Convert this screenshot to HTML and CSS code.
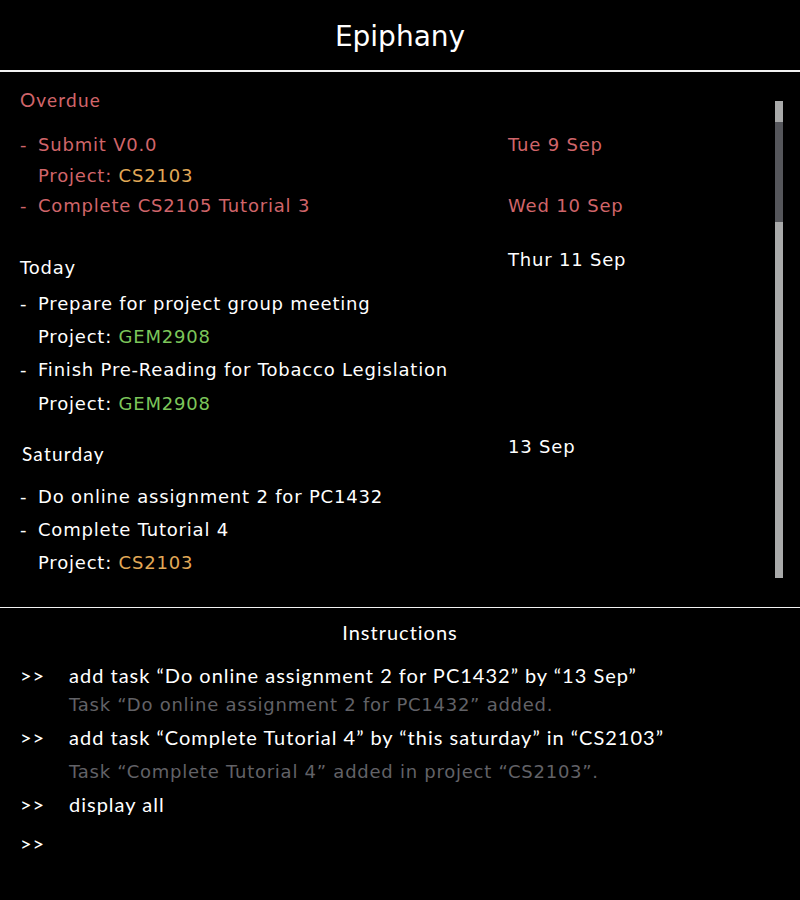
FILE: index.html
```html
<!DOCTYPE html>
<html>
<head>
<meta charset="utf-8">
<title>Epiphany</title>
<link rel="stylesheet" href="styles.css">
</head>
<body>
<div class="app">
  <header class="title-bar"><h1 class="title">Epiphany</h1></header>

  <section class="tasks-panel">
    <div class="tasks">
      <div class="section section-overdue">
        <div class="section-head"><span class="label label-myriad">Overdue</span></div>
        <div class="items">
          <div class="row">
            <div class="task">
              <div class="line"><span class="dash">-</span>Submit V0.0</div>
              <div class="line project">Project: <span class="proj-orange">CS2103</span></div>
            </div>
            <div class="date">Tue 9 Sep</div>
          </div>
          <div class="row">
            <div class="task">
              <div class="line"><span class="dash">-</span>Complete CS2105 Tutorial 3</div>
            </div>
            <div class="date">Wed 10 Sep</div>
          </div>
        </div>
      </div>

      <div class="section section-today">
        <div class="section-head">
          <span class="label">Today</span>
          <span class="date">Thur 11 Sep</span>
        </div>
        <div class="items tall">
          <div class="line"><span class="dash">-</span>Prepare for project group meeting</div>
          <div class="line project">Project: <span class="proj-green">GEM2908</span></div>
          <div class="line"><span class="dash">-</span>Finish Pre-Reading for Tobacco Legislation</div>
          <div class="line project">Project: <span class="proj-green">GEM2908</span></div>
        </div>
      </div>

      <div class="section section-saturday">
        <div class="section-head">
          <span class="label label-myriad label-sat">Saturday</span>
          <span class="date">13 Sep</span>
        </div>
        <div class="items tall">
          <div class="line"><span class="dash">-</span>Do online assignment 2 for PC1432</div>
          <div class="line"><span class="dash">-</span>Complete Tutorial 4</div>
          <div class="line project">Project: <span class="proj-orange">CS2103</span></div>
        </div>
      </div>
    </div>
    <div class="scrollbar"><div class="scroll-thumb"></div></div>
  </section>

  <section class="console">
    <h2 class="console-title">Instructions</h2>
    <div class="entry">
      <div class="cmd"><span class="prompt">&gt;&gt;</span>add task “Do online assignment 2 for PC1432” by “13 Sep”</div>
      <div class="resp">Task “Do online assignment 2 for PC1432” added.</div>
    </div>
    <div class="entry entry-next">
      <div class="cmd"><span class="prompt">&gt;&gt;</span>add task “Complete Tutorial 4” by “this saturday” in “CS2103”</div>
      <div class="resp resp-gap">Task “Complete Tutorial 4” added in project “CS2103”.</div>
    </div>
    <div class="entry entry-next">
      <div class="cmd"><span class="prompt">&gt;&gt;</span>display all</div>
    </div>
    <div class="entry entry-last">
      <div class="cmd"><span class="prompt">&gt;&gt;</span></div>
    </div>
  </section>
</div>
</body>
</html>
```

FILE: styles.css
```css
html, body {
  margin: 0;
  padding: 0;
  background: #000;
}

.app {
  width: 800px;
  height: 900px;
  background: #000;
  color: #fff;
  font-family: "DejaVu Sans", "Noto Sans", sans-serif;
  font-size: 18px;
  letter-spacing: 0.8px;
  overflow: hidden;
}

.title-bar {
  height: 70px;
  border-bottom: 2px solid #f2f2f2;
  display: flex;
  align-items: center;
  justify-content: center;
}

.title {
  margin: 0;
  font-family: "DejaVu Sans", sans-serif;
  font-weight: 400;
  font-size: 28px;
  letter-spacing: 0;
  line-height: 40px;
  padding-top: 3px;
}

.tasks-panel {
  height: 535px;
  border-bottom: 1px solid #f2f2f2;
  display: flex;
}

.tasks {
  flex: 1;
  padding: 13px 0 0 20px;
}

.section-today { margin-top: 23px; }
.section-saturday { margin-top: 12px; }

.section-head {
  display: flex;
  align-items: flex-start;
  line-height: 30px;
}

.label {
  width: 488px;
  flex: none;
}

.section-today .label {
  padding-top: 8px;
}

.section-saturday .label {
  padding-top: 7px;
}

.label-myriad {
  font-family: Lato, "Open Sans", sans-serif;
  font-size: 19px;
  letter-spacing: 1.2px;
}

.label-sat {
  padding-left: 2px;
  width: 486px;
}

.section-overdue {
  color: #d0656a;
}

.section-overdue .items {
  margin-top: 15px;
}

.section-overdue .line {
  line-height: 30.5px;
}

.row {
  display: flex;
  align-items: flex-start;
}

.task {
  width: 488px;
  flex: none;
}

.line {
  line-height: 30px;
  white-space: nowrap;
}

.items.tall {
  margin-top: 4px;
}

.section-saturday .items.tall {
  margin-top: 11px;
}

.items.tall .line {
  line-height: 33px;
}

.section-today .items.tall .line {
  line-height: 33.4px;
}

.dash {
  display: inline-block;
  width: 18px;
  letter-spacing: 0;
}

.project {
  padding-left: 18px;
}

.date {
  line-height: 30px;
  white-space: nowrap;
}

.section-overdue .date {
  line-height: 30.5px;
}

.proj-orange { color: #e2a957; }
.proj-green { color: #7cc65a; }

.scrollbar {
  width: 8px;
  flex: none;
  margin: 29px 17px 0 0;
  height: 477px;
  background: #a9aaaa;
  display: flex;
  flex-direction: column;
}

.scroll-thumb {
  margin-top: 21px;
  height: 100px;
  background: #55565b;
}

.console {
  font-family: Lato, "Open Sans", sans-serif;
  font-size: 20px;
  letter-spacing: 1px;
  padding-top: 9px;
}

.console-title {
  margin: 0 0 13px;
  text-align: center;
  font-weight: 400;
  font-size: 20px;
  line-height: 30px;
}

.cmd, .resp {
  line-height: 30px;
  white-space: nowrap;
  padding-left: 20px;
}

.prompt {
  display: inline-block;
  width: 49px;
}

.resp {
  padding-left: 69px;
  color: #626267;
  margin-top: 0;
  font-family: "DejaVu Sans", sans-serif;
  font-size: 18px;
  letter-spacing: 0.75px;
}

.resp-gap { margin-top: 5px; }

.entry-next { margin-top: 2px; }
.entry-last { margin-top: 9px; }
```
